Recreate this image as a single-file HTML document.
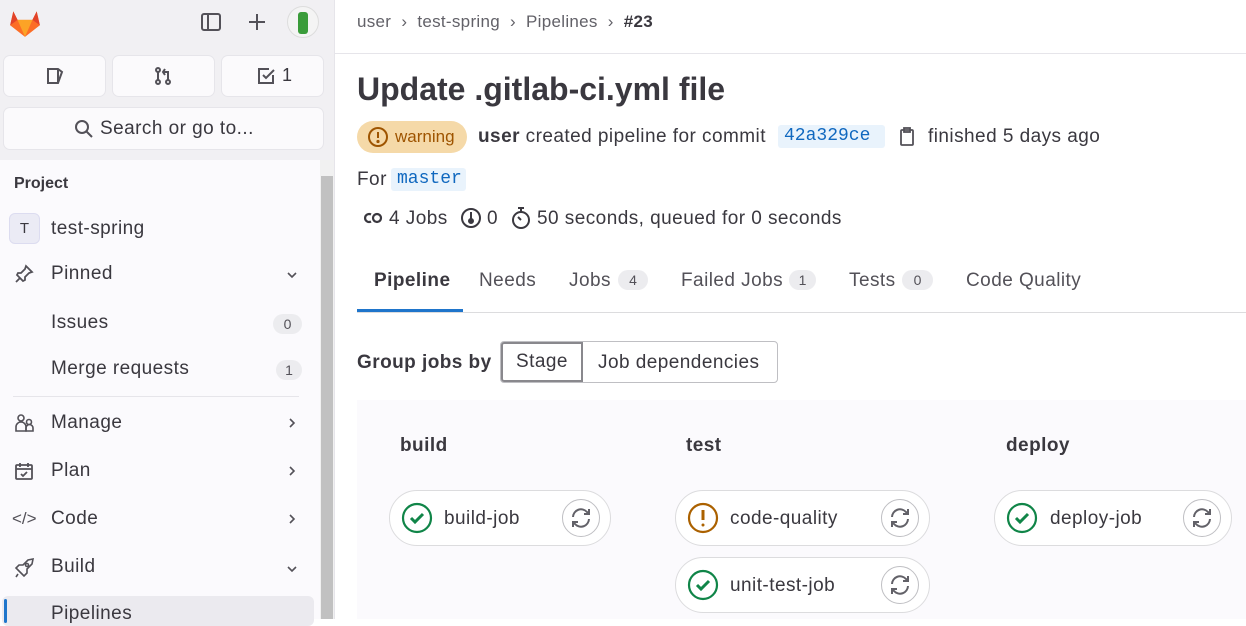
<!DOCTYPE html>
<html><head><meta charset="utf-8"><style>
*{box-sizing:border-box;margin:0;padding:0}
body{width:1246px;height:619px;overflow:hidden;background:#fff;font-family:"Liberation Sans",sans-serif;color:#3a383f;position:relative}
.a{position:absolute;white-space:nowrap}
.t{font-size:19px;letter-spacing:.45px}
.sb{left:0;top:0;width:334px;height:619px;background:#f1f0f3}
.btn{background:#fbfafc;border-radius:6px;box-shadow:0 0 0 1px #e6e5ea}
.nav{font-size:19px;letter-spacing:.45px;color:#3a383f}
.badge{background:#ececef;border-radius:10px;font-size:14px;color:#535158;text-align:center;height:20px;line-height:20px}
.job{background:#fff;border:1px solid #dcdcde;border-radius:30px;height:56px}
.rt{width:38px;height:38px;border:1px solid #bfbfc3;border-radius:50%}
svg{display:block}
</style></head><body>
<div class="a sb"></div>
<div class="a" style="left:0;top:160px;width:320px;height:459px;background:#fbfafd"></div>
<div class="a" style="left:320px;top:160px;width:14px;height:459px;background:#f1f1f1"></div>
<div class="a" style="left:321px;top:176px;width:12px;height:443px;background:#c1c1c1"></div>
<div class="a" style="left:334px;top:0;width:1px;height:619px;background:#e6e5ea"></div>
<svg class="a" style="left:8px;top:5px" width="34" height="34" viewBox="0 0 32 32"><path d="M16 30 L2 19 L5 6 L9 14 L23 14 L27 6 L30 19 Z" fill="#fc6d26"/><path d="M2 19 L5 6 L9 14 Z" fill="#e24329"/><path d="M30 19 L27 6 L23 14 Z" fill="#e24329"/><path d="M9 14 L16 30 L23 14 Z" fill="#fca326"/></svg>
<svg class="a" style="left:200px;top:11px" width="22" height="22" viewBox="0 0 22 22" fill="none" stroke="#535158" stroke-width="2"><rect x="2" y="3" width="18" height="16" rx="2"/><line x1="8" y1="3" x2="8" y2="19"/></svg>
<svg class="a" style="left:247px;top:12px" width="20" height="20" viewBox="0 0 20 20" stroke="#535158" stroke-width="2"><line x1="10" y1="2" x2="10" y2="18"/><line x1="2" y1="10" x2="18" y2="10"/></svg>
<div class="a" style="left:287px;top:6px;width:32px;height:32px;border-radius:50%;background:#f4f4f4;border:1px solid #ddd"></div>
<div class="a" style="left:298px;top:12px;width:10px;height:22px;background:#3a9c3a;border-radius:3px"></div>
<div class="a btn" style="left:4px;top:56px;width:101px;height:40px"></div>
<div class="a btn" style="left:113px;top:56px;width:101px;height:40px"></div>
<div class="a btn" style="left:222px;top:56px;width:101px;height:40px"></div>
<svg class="a" style="left:45px;top:66px" width="20" height="20" viewBox="0 0 20 20" fill="none" stroke="#535158" stroke-width="2"><path d="M3 3h10l4 3-4 11H3z"/><path d="M13 3v14"/></svg>
<svg class="a" style="left:153px;top:66px" width="20" height="20" viewBox="0 0 20 20" fill="none" stroke="#535158" stroke-width="2"><circle cx="5" cy="4" r="2"/><circle cx="5" cy="16" r="2"/><circle cx="15" cy="16" r="2"/><path d="M5 6v8M15 14V6h-4M12 3l-2 3 2 3"/></svg>
<svg class="a" style="left:256px;top:66px" width="20" height="20" viewBox="0 0 20 20" fill="none" stroke="#535158" stroke-width="2"><path d="M17 9v8H3V3h10"/><path d="M7 9l3 3 8-8"/></svg>
<div class="a" style="left:282px;top:65px;font-size:18px;color:#3a383f">1</div>
<div class="a btn" style="left:4px;top:108px;width:319px;height:41px"></div>
<svg class="a" style="left:74px;top:119px" width="20" height="20" viewBox="0 0 20 20" fill="none" stroke="#535158" stroke-width="2"><circle cx="8" cy="8" r="6"/><line x1="12.5" y1="12.5" x2="18" y2="18"/></svg>
<div class="a t" style="left:100px;top:118px">Search or go to...</div>
<div class="a" style="left:14px;top:175px;font-size:16px;font-weight:bold;color:#3a383f">Project</div>
<div class="a" style="left:9px;top:213px;width:31px;height:31px;border-radius:6px;background:#ebebf5;border:1px solid #dcdcf0;font-size:15px;text-align:center;line-height:29px">T</div>
<div class="a nav" style="left:51px;top:218px">test-spring</div>
<svg class="a" style="left:14px;top:264px" width="20" height="20" viewBox="0 0 20 20" fill="none" stroke="#535158" stroke-width="1.8"><path d="M12 2l6 6-3 1-4 4 0 3-2 1-6-6 1-2 3 0 4-4z"/><line x1="6" y1="14" x2="2" y2="18"/></svg>
<div class="a nav" style="left:51px;top:263px">Pinned</div>
<svg class="a" style="left:285px;top:268px" width="14" height="14" viewBox="0 0 14 14" fill="none" stroke="#535158" stroke-width="1.6"><path d="M3 5l4 4 4-4"/></svg>
<div class="a nav" style="left:51px;top:312px">Issues</div>
<div class="a badge" style="left:273px;top:314px;width:29px">0</div>
<div class="a nav" style="left:51px;top:358px">Merge requests</div>
<div class="a badge" style="left:276px;top:360px;width:26px">1</div>
<div class="a" style="left:13px;top:396px;width:286px;height:1px;background:#e6e5ea"></div>
<svg class="a" style="left:14px;top:413px" width="22" height="20" viewBox="0 0 22 20" fill="none" stroke="#535158" stroke-width="1.6"><circle cx="7" cy="5" r="3"/><path d="M2 18v-4a5 5 0 0 1 10 0v4z"/><circle cx="15" cy="9" r="2.5"/><path d="M12 18v-3a3.5 3.5 0 0 1 7 0v3z"/></svg>
<div class="a nav" style="left:51px;top:412px">Manage</div>
<svg class="a" style="left:14px;top:461px" width="20" height="20" viewBox="0 0 20 20" fill="none" stroke="#535158" stroke-width="1.8"><rect x="2" y="4" width="16" height="14" rx="1"/><path d="M2 8h16M6 2v4M14 2v4M7 13l2 2 4-4"/></svg>
<div class="a nav" style="left:51px;top:460px">Plan</div>
<div class="a" style="left:12px;top:509px;font-size:17px;color:#535158">&lt;/&gt;</div>
<div class="a nav" style="left:51px;top:508px">Code</div>
<svg class="a" style="left:13px;top:557px" width="22" height="22" viewBox="0 0 22 22" fill="none" stroke="#535158" stroke-width="1.6"><path d="M6 14l-3-3 3-3 4 0 5-5 5-1-1 5-5 5 0 4-3 3-3-3z"/><circle cx="14" cy="8" r="1.5"/><path d="M5 17l-2 3"/></svg>
<div class="a nav" style="left:51px;top:556px">Build</div>
<svg class="a" style="left:285px;top:416px" width="14" height="14" viewBox="0 0 14 14" fill="none" stroke="#535158" stroke-width="1.6"><path d="M5 3l4 4-4 4"/></svg>
<svg class="a" style="left:285px;top:464px" width="14" height="14" viewBox="0 0 14 14" fill="none" stroke="#535158" stroke-width="1.6"><path d="M5 3l4 4-4 4"/></svg>
<svg class="a" style="left:285px;top:512px" width="14" height="14" viewBox="0 0 14 14" fill="none" stroke="#535158" stroke-width="1.6"><path d="M5 3l4 4-4 4"/></svg>
<svg class="a" style="left:285px;top:562px" width="14" height="14" viewBox="0 0 14 14" fill="none" stroke="#535158" stroke-width="1.6"><path d="M3 5l4 4 4-4"/></svg>
<div class="a" style="left:2px;top:596px;width:312px;height:30px;background:#ebeaef;border-radius:6px"></div>
<div class="a" style="left:4px;top:599px;width:3px;height:24px;background:#1f75cb;border-radius:2px"></div>
<div class="a nav" style="left:51px;top:603px">Pipelines</div>

<div class="a" style="left:335px;top:53px;width:911px;height:1px;background:#e6e5ea"></div>
<div class="a" style="left:357px;top:12px;font-size:17px;letter-spacing:.3px;color:#626168">user &nbsp;›&nbsp; test-spring &nbsp;›&nbsp; Pipelines &nbsp;›&nbsp; <b style="color:#3a383f">#23</b></div>
<div class="a" style="left:357px;top:71px;font-size:32px;font-weight:bold;color:#3a383f">Update .gitlab-ci.yml file</div>
<div class="a" style="left:357px;top:121px;width:110px;height:32px;border-radius:16px;background:#f5d9a8"></div>
<svg class="a" style="left:367px;top:126px" width="22" height="22" viewBox="0 0 22 22" fill="none" stroke="#9e5400" stroke-width="2"><circle cx="11" cy="11" r="9"/><path d="M11 6v6"/><circle cx="11" cy="15.5" r="0.6" fill="#9e5400"/></svg>
<div class="a" style="left:395px;top:127px;font-size:17px;color:#9e5400">warning</div>
<div class="a t" style="left:478px;top:126px"><b>user</b> created pipeline for commit</div>
<div class="a" style="left:778px;top:125px;width:107px;height:23px;background:#e9f3fc;border-radius:3px;font-family:'Liberation Mono',monospace;font-size:18px;color:#1068bf;padding-left:6px;line-height:23px">42a329ce</div>
<svg class="a" style="left:898px;top:127px" width="18" height="20" viewBox="0 0 18 20" fill="none" stroke="#535158" stroke-width="1.8"><rect x="3" y="3" width="12" height="15" rx="1"/><rect x="6" y="1" width="6" height="4"/></svg>
<div class="a t" style="left:928px;top:126px">finished 5 days ago</div>
<div class="a t" style="left:357px;top:169px">For</div>
<div class="a" style="left:391px;top:168px;width:75px;height:23px;background:#e9f3fc;border-radius:3px;font-family:'Liberation Mono',monospace;font-size:18px;color:#1068bf;padding-left:6px;line-height:23px">master</div>
<svg class="a" style="left:362px;top:211px" width="22" height="14" viewBox="0 0 22 14" fill="none" stroke="#3a383f" stroke-width="2.2"><path d="M9 3.5a4 4 0 1 0 0 7"/><circle cx="15" cy="7" r="4"/></svg>
<div class="a t" style="left:389px;top:208px">4 Jobs</div>
<svg class="a" style="left:460px;top:207px" width="22" height="22" viewBox="0 0 22 22" fill="none" stroke="#3a383f" stroke-width="2"><circle cx="11" cy="11" r="9"/><path d="M11 5v8"/><circle cx="11" cy="14" r="2" fill="#3a383f"/></svg>
<div class="a t" style="left:487px;top:208px">0</div>
<svg class="a" style="left:510px;top:206px" width="22" height="24" viewBox="0 0 22 24" fill="none" stroke="#3a383f" stroke-width="2"><circle cx="11" cy="14" r="8"/><path d="M8 2h6M11 2v4M11 14l-3-3"/></svg>
<div class="a t" style="left:537px;top:208px">50 seconds, queued for 0 seconds</div>
<div class="a" style="left:357px;top:312px;width:889px;height:1px;background:#dcdcde"></div>
<div class="a" style="left:357px;top:309px;width:106px;height:3px;background:#1f75cb"></div>
<div class="a t" style="left:374px;top:270px;font-weight:bold;color:#3a383f">Pipeline</div>
<div class="a t" style="left:479px;top:270px;color:#535158">Needs</div>
<div class="a t" style="left:569px;top:270px;color:#535158">Jobs</div>
<div class="a badge" style="left:618px;top:270px;width:30px">4</div>
<div class="a t" style="left:681px;top:270px;color:#535158">Failed Jobs</div>
<div class="a badge" style="left:789px;top:270px;width:27px">1</div>
<div class="a t" style="left:849px;top:270px;color:#535158">Tests</div>
<div class="a badge" style="left:902px;top:270px;width:31px">0</div>
<div class="a t" style="left:966px;top:270px;color:#535158">Code Quality</div>
<div class="a t" style="left:357px;top:352px;font-weight:bold">Group jobs by</div>
<div class="a" style="left:500px;top:341px;width:278px;height:42px;border:1px solid #bfbfc3;border-radius:4px"></div>
<div class="a t" style="left:501px;top:342px;width:82px;height:40px;border:2px solid #89888d;border-radius:3px 0 0 3px;background:#fff;text-align:center;line-height:36px">Stage</div>
<div class="a t" style="left:598px;top:352px">Job dependencies</div>
<div class="a" style="left:357px;top:400px;width:889px;height:219px;background:#fbfafd"></div>
<div class="a t" style="left:400px;top:435px;font-weight:bold">build</div>
<div class="a t" style="left:686px;top:435px;font-weight:bold">test</div>
<div class="a t" style="left:1006px;top:435px;font-weight:bold">deploy</div>

<div class="a job" style="left:389px;top:490px;width:222px"></div>
<div class="a job" style="left:675px;top:490px;width:255px"></div>
<div class="a job" style="left:675px;top:557px;width:255px"></div>
<div class="a job" style="left:994px;top:490px;width:238px"></div>

<svg class="a" style="left:401px;top:502px" width="32" height="32" viewBox="0 0 32 32" fill="none" stroke="#108548" stroke-width="2.2"><circle cx="16" cy="16" r="14"/><path d="M10 16l4 4 8-8" stroke-width="3"/></svg>
<div class="a t" style="left:444px;top:508px">build-job</div>
<div class="a rt" style="left:562px;top:499px"></div>
<svg class="a" style="left:687px;top:502px" width="32" height="32" viewBox="0 0 32 32" fill="none" stroke="#ab6100" stroke-width="2.2"><circle cx="16" cy="16" r="14"/><path d="M16 8v10" stroke-width="3"/><circle cx="16" cy="23" r="1.5" fill="#ab6100" stroke="none"/></svg>
<div class="a t" style="left:730px;top:508px">code-quality</div>
<div class="a rt" style="left:881px;top:499px"></div>
<svg class="a" style="left:687px;top:569px" width="32" height="32" viewBox="0 0 32 32" fill="none" stroke="#108548" stroke-width="2.2"><circle cx="16" cy="16" r="14"/><path d="M10 16l4 4 8-8" stroke-width="3"/></svg>
<div class="a t" style="left:730px;top:575px">unit-test-job</div>
<div class="a rt" style="left:881px;top:566px"></div>
<svg class="a" style="left:1006px;top:502px" width="32" height="32" viewBox="0 0 32 32" fill="none" stroke="#108548" stroke-width="2.2"><circle cx="16" cy="16" r="14"/><path d="M10 16l4 4 8-8" stroke-width="3"/></svg>
<div class="a t" style="left:1050px;top:508px">deploy-job</div>
<div class="a rt" style="left:1183px;top:499px"></div>
<svg class="a" style="left:569px;top:506px" width="24" height="24" viewBox="0 0 24 24" fill="none" stroke="#626168" stroke-width="2"><path d="M4 11a8 8 0 0 1 14-5l2 2M20 13a8 8 0 0 1-14 5l-2-2"/><path d="M20 3v5h-5M4 21v-5h5"/></svg>
<svg class="a" style="left:888px;top:506px" width="24" height="24" viewBox="0 0 24 24" fill="none" stroke="#626168" stroke-width="2"><path d="M4 11a8 8 0 0 1 14-5l2 2M20 13a8 8 0 0 1-14 5l-2-2"/><path d="M20 3v5h-5M4 21v-5h5"/></svg>
<svg class="a" style="left:888px;top:573px" width="24" height="24" viewBox="0 0 24 24" fill="none" stroke="#626168" stroke-width="2"><path d="M4 11a8 8 0 0 1 14-5l2 2M20 13a8 8 0 0 1-14 5l-2-2"/><path d="M20 3v5h-5M4 21v-5h5"/></svg>
<svg class="a" style="left:1190px;top:506px" width="24" height="24" viewBox="0 0 24 24" fill="none" stroke="#626168" stroke-width="2"><path d="M4 11a8 8 0 0 1 14-5l2 2M20 13a8 8 0 0 1-14 5l-2-2"/><path d="M20 3v5h-5M4 21v-5h5"/></svg>
</body></html>
